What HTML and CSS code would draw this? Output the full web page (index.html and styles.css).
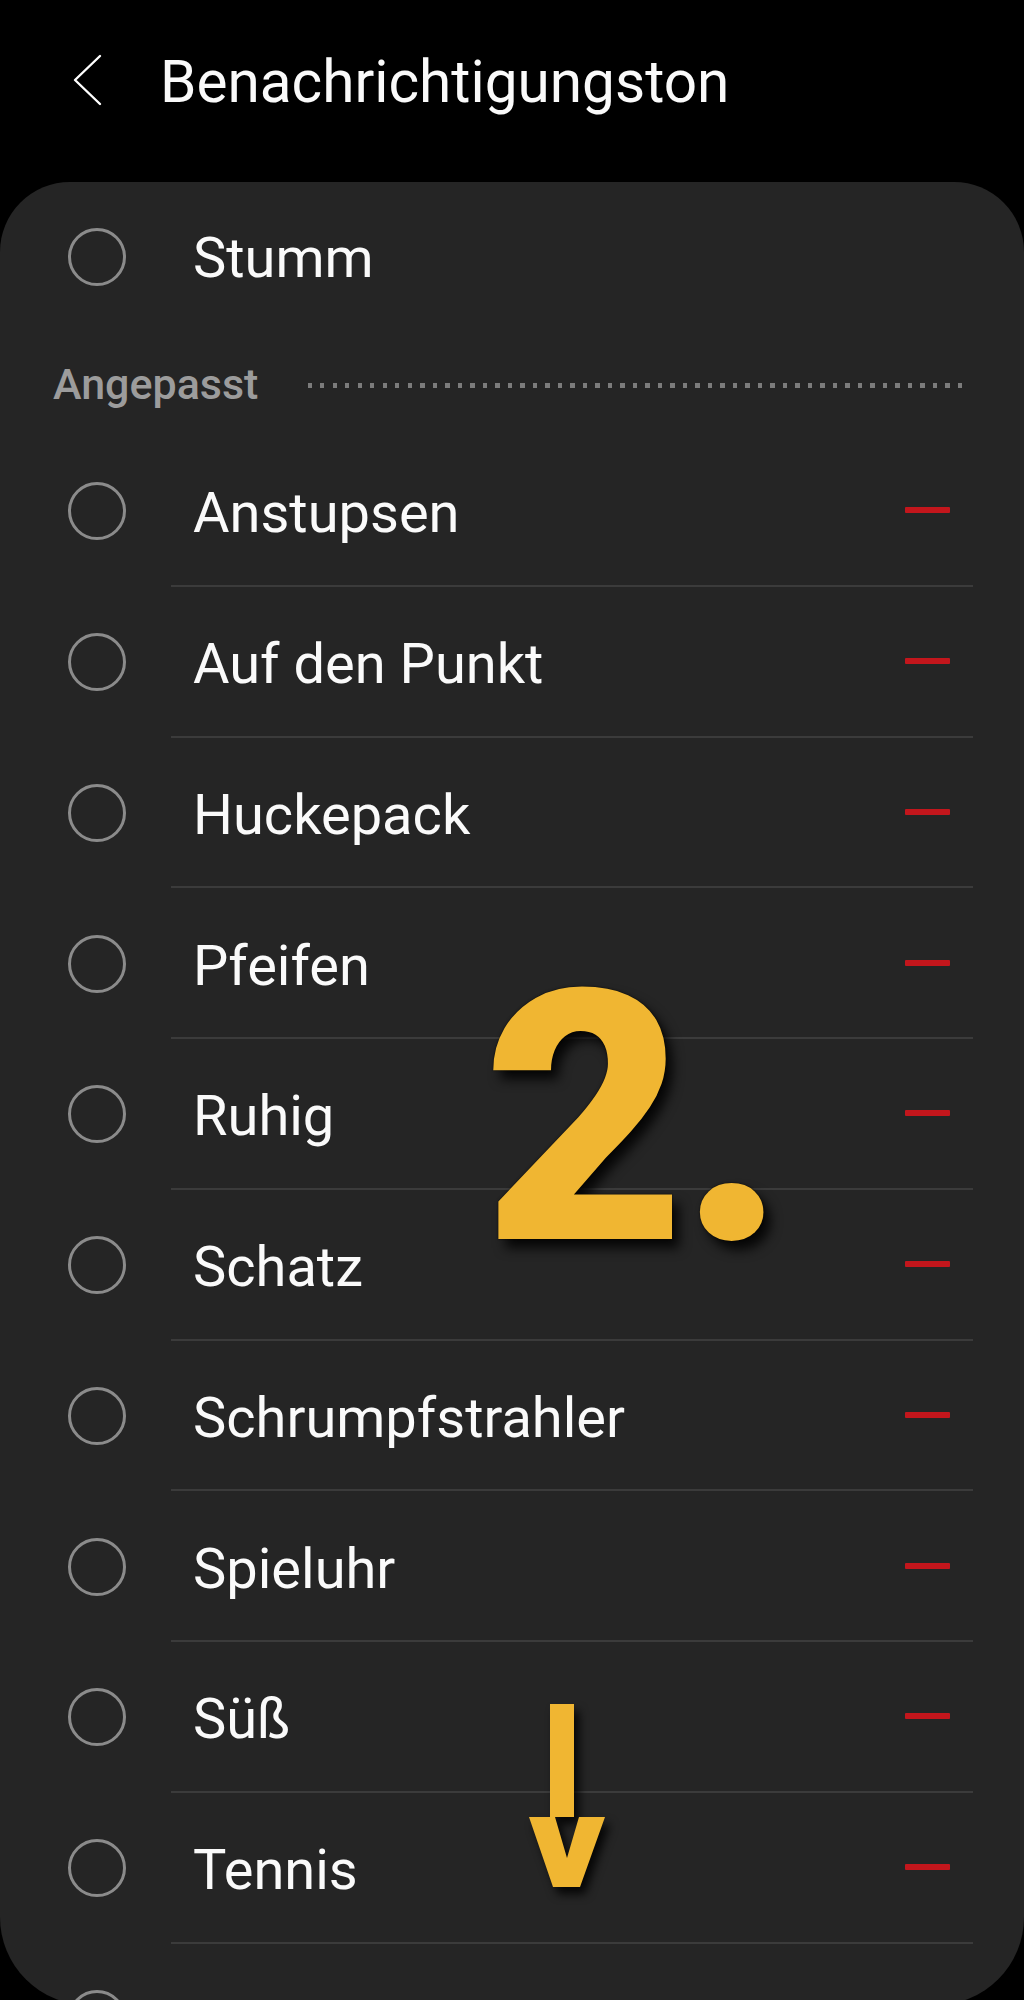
FILE: index.html
```html
<!DOCTYPE html>
<html lang="de">
<head>
  <meta charset="UTF-8">
  <meta name="viewport" content="width=device-width, initial-scale=1.0">
  <title>Benachrichtigungston</title>
  <link rel="stylesheet" href="styles.css">
</head>
<body>

  <header class="topbar">
    <svg class="back" viewBox="0 0 30 52" width="30" height="52">
      <polyline points="27,2 2,26 27,50" fill="none" stroke="#fff" stroke-width="2.4" stroke-linecap="round" stroke-linejoin="round"/>
    </svg>
    <h1>Benachrichtigungston</h1>
  </header>

  <div class="card">
    <div class="row first">
      <span class="radio"></span>
      <div class="row-body plain">
        <span class="label">Stumm</span>
      </div>
    </div>

    <div class="section-head">
      <span>Angepasst</span>
      <div class="dots"></div>
    </div>

    <div class="row">
      <span class="radio"></span>
      <div class="row-body"><span class="label">Anstupsen</span><span class="remove"></span></div>
    </div>
    <div class="row">
      <span class="radio"></span>
      <div class="row-body"><span class="label">Auf den Punkt</span><span class="remove"></span></div>
    </div>
    <div class="row">
      <span class="radio"></span>
      <div class="row-body"><span class="label">Huckepack</span><span class="remove"></span></div>
    </div>
    <div class="row">
      <span class="radio"></span>
      <div class="row-body"><span class="label">Pfeifen</span><span class="remove"></span></div>
    </div>
    <div class="row">
      <span class="radio"></span>
      <div class="row-body"><span class="label">Ruhig</span><span class="remove"></span></div>
    </div>
    <div class="row">
      <span class="radio"></span>
      <div class="row-body"><span class="label">Schatz</span><span class="remove"></span></div>
    </div>
    <div class="row">
      <span class="radio"></span>
      <div class="row-body"><span class="label">Schrumpfstrahler</span><span class="remove"></span></div>
    </div>
    <div class="row">
      <span class="radio"></span>
      <div class="row-body"><span class="label">Spieluhr</span><span class="remove"></span></div>
    </div>
    <div class="row">
      <span class="radio"></span>
      <div class="row-body"><span class="label">Süß</span><span class="remove"></span></div>
    </div>
    <div class="row">
      <span class="radio"></span>
      <div class="row-body"><span class="label">Tennis</span><span class="remove"></span></div>
    </div>
    <div class="row">
      <span class="radio"></span>
      <div class="row-body"><span class="label"></span><span class="remove"></span></div>
    </div>
  </div>

  <!-- step marker laid over the list -->
  <div class="step">2.</div>
  <svg class="arrow" viewBox="0 0 100 210" width="100" height="210">
    <rect x="30" y="9" width="24" height="113" fill="#f0b632"/>
    <polygon points="9,122 35,122 47,163 59,122 85,122 60,192 33,192" fill="#f0b632"/>
  </svg>

</body>
</html>
```

FILE: styles.css
```css
body {
  margin: 0;
  background-color: #000;
  font-family: Roboto, "Liberation Sans", sans-serif;
  color: #fafafa;
  height: 2000px;
  overflow: hidden;
  position: relative;
}
.topbar {
  height: 164px;
  padding-bottom: 18px;
  display: flex;
  align-items: center;
}
.back {
  margin-left: 73px;
  margin-top: -4px;
}
.topbar h1 {
  margin: 0 0 0 57px;
  font-size: 58.5px;
  font-weight: 400;
  line-height: 1;
}
.card {
  background-color: #252525;
  border-radius: 70px 70px 88px 88px;
  height: 1823px;
  overflow: hidden;
}
.row {
  height: 150.75px;
  display: flex;
  align-items: center;
}
.row.first {
  height: 150px;
}
.radio {
  flex: none;
  width: 52px;
  height: 52px;
  margin-left: 68px;
  border: 3px solid #8b8b8b;
  border-radius: 50%;
}
.row-body {
  flex: 1;
  align-self: stretch;
  margin: 0 51px 0 45px;
  padding: 0 23px 0 22px;
  border-bottom: 2px solid #3b3b3b;
  display: flex;
  align-items: center;
  justify-content: space-between;
}
.row-body.plain {
  border-bottom: none;
}
.label {
  font-size: 56px;
  line-height: 1;
  padding-top: 6px;
}
.first .label {
  padding-top: 2px;
}
.remove {
  width: 45px;
  height: 6px;
  background-color: #c3161c;
  border-radius: 1px;
}
.section-head {
  height: 104px;
  display: flex;
  align-items: center;
  padding: 0 59px 0 53px;
}
.section-head span {
  font-size: 43px;
  font-weight: 500;
  color: #9c9c9c;
  line-height: 1;
}
.dots {
  flex: 1;
  height: 5px;
  margin: 2px 0 0 50px;
  background-image: repeating-linear-gradient(to right, #7c7c7c 0 4px, transparent 4px 12.5px);
}
.step {
  position: absolute;
  left: 483px;
  top: 944px;
  font-size: 350px;
  font-weight: 900;
  line-height: 1;
  letter-spacing: -6px;
  color: #f0b632;
  text-shadow: 0 0 2px rgba(0, 0, 0, 0.9), 7px 9px 12px rgba(0, 0, 0, 0.85);
}
.arrow {
  position: absolute;
  left: 520px;
  top: 1695px;
  filter: drop-shadow(5px 7px 5px rgba(0, 0, 0, 0.85));
}
```
